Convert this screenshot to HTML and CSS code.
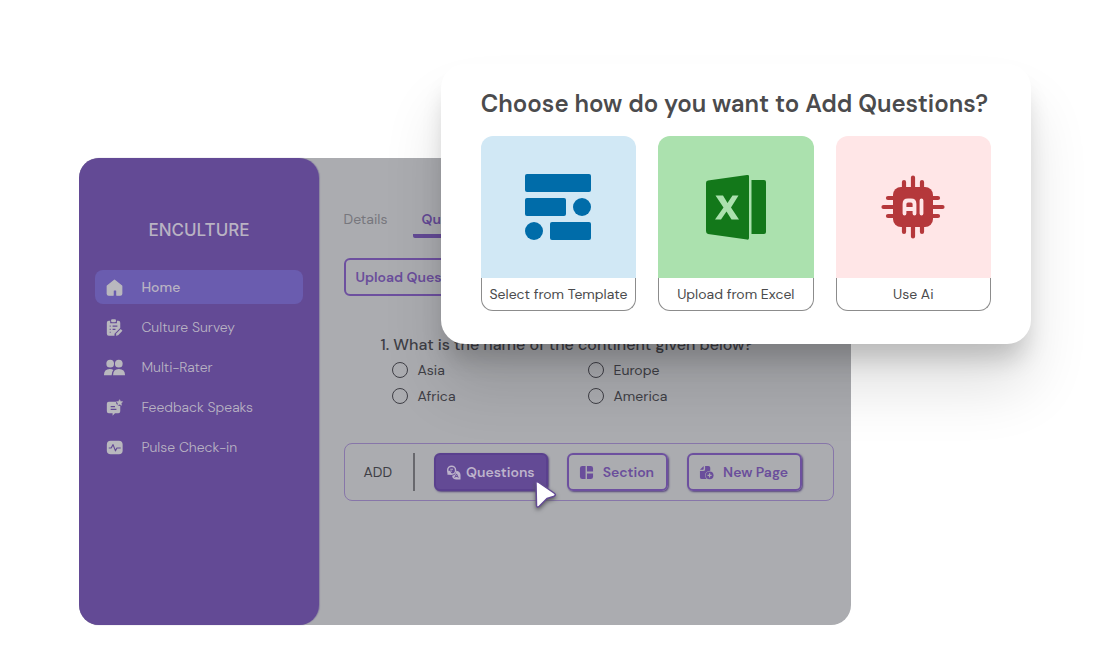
FILE: index.html
```html
<!DOCTYPE html>
<html lang="en">
<head>
<meta charset="utf-8">
<meta name="viewport" content="width=device-width, initial-scale=1">
<title>Enculture</title>
<link rel="stylesheet" href="styles.css">
</head>
<body>
<div class="stage">
  <div class="app">
    <aside class="sidebar">
      <div class="brand">ENCULTURE</div>
      <nav class="nav">
        <a class="nav-item active" href="#">
          <svg class="nav-icon" viewBox="0 0 24 24"><path d="M12 4.500 19.500 10.500V18.500Q19.500 20 18 20H14.500V15.500Q14.500 14.500 13.500 14.500H11.500Q10.500 14.500 10.500 15.500V20H6Q4.500 20 4.500 18.500V10.500Z" stroke="currentColor" stroke-width="1.400" stroke-linejoin="round"/></svg>
          Home</a>
        <a class="nav-item" href="#">
          <svg class="nav-icon" viewBox="0 0 24 24"><path d="M6 5H7.500V7.500H14.500V5H16Q18 5 18 7V12.500L12 18.500V20.500H6Q4 20.500 4 18.500V7Q4 5 6 5Z"/><rect x="8.500" y="3.500" width="5" height="3" rx="1"/><path d="M7 10.500H8M10 10.500H15M7 14H8M10 14H13M7 17H8" stroke="#634a95" stroke-width="1.200"/><path d="M13.500 20.500 14 18 18.500 13.500 20.300 15.300 15.800 20Z"/></svg>
          Culture Survey</a>
        <a class="nav-item" href="#">
          <svg class="nav-icon" viewBox="0 0 24 24"><circle cx="7.500" cy="8" r="4"/><circle cx="16.500" cy="8" r="4"/><path d="M1 20Q1 13.500 7 13.500 9.500 13.500 10.800 14.500 9 16.500 9 20Z"/><path d="M10.500 20Q10.500 13.500 16.500 13.500 23 13.500 23 20Z"/></svg>
          Multi-Rater</a>
        <a class="nav-item" href="#">
          <svg class="nav-icon" viewBox="0 0 24 24"><path d="M6 6H13.500Q14 10.500 18 10.500V16Q18 18 16 18H12.500L10 20.500V18H6Q4 18 4 16V8Q4 6 6 6Z"/><path d="M8 11H12.500M8 14H14" stroke="#634a95" stroke-width="1.300"/><path d="m17.300 3.800 1 1.900 2.200.3-1.600 1.500.4 2.200-2-1-2 1 .4-2.200L14.100 6l2.200-.3Z" stroke="currentColor" stroke-width=".6"/></svg>
          Feedback Speaks</a>
        <a class="nav-item" href="#">
          <svg class="nav-icon" viewBox="0 0 24 24"><rect x="4" y="5" width="16.500" height="14" rx="4"/><path d="M6 12.500H8.500L10.500 9 13 15.500 14.500 12.500H18.500" fill="none" stroke="#634a95" stroke-width="1.200" stroke-linejoin="round"/></svg>
          Pulse Check-in</a>
      </nav>
    </aside>
    <main class="main">
      <nav class="tabs">
        <a class="tab" href="#">Details</a>
        <a class="tab current" href="#">Questions</a>
      </nav>
      <button class="outline upload" type="button">Upload Questions</button>
      <fieldset class="question">
        <legend>1. What is the name of the continent given below?</legend>
        <div class="options">
          <label><input type="radio" name="continent">Asia</label>
          <label><input type="radio" name="continent">Europe</label>
          <label><input type="radio" name="continent">Africa</label>
          <label><input type="radio" name="continent">America</label>
        </div>
      </fieldset>
      <div class="add-bar">
        <span class="add-label">ADD</span>
        <button class="outline filled" type="button">
          <svg class="btn-icon" viewBox="0 0 16 16"><circle cx="6" cy="5.500" r="4.200" fill="none" stroke="currentColor" stroke-width="1.500"/><path d="M1.500 10.500V6H4L7 10.500Z" fill="currentColor"/><path d="M4.500 4.500H7.500M4.500 6.500H6.500" fill="none" stroke="currentColor"/><path d="M11 6Q15.500 6.500 15.500 11V15.500H11Q7 15.500 6.500 11.500 10.500 10.500 11 6Z" fill="currentColor"/><path d="m9.300 13.500 1.900-4 1.900 4M10 12.300H12.500" fill="none" stroke="#634a95"/></svg>
          Questions
          <svg class="cursor" viewBox="0 0 28 34"><path d="M4 4Q3 1.500 6 3L22 14Q25 16 21.500 17.500L15 19.500 7.500 27Q4.500 29.500 4.500 26Z" fill="#fff" stroke="#634a95" stroke-width="1.500" stroke-linejoin="round"/></svg>
        </button>
        <button class="outline" type="button">
          <svg class="btn-icon" viewBox="0 0 16 16" fill="currentColor"><path d="M3.500 1H7V15H3.500Q1 15 1 12.500V3.500Q1 1 3.500 1ZM8.500 1H12.500Q15 1 15 3.500V7H8.500ZM8.500 9H15V12.500Q15 15 12.500 15H8.500Z"/></svg>
          Section</button>
        <button class="outline" type="button">
          <svg class="btn-icon" viewBox="0 0 16 16"><path d="M6.500 1H10Q12 1 12 3V6Q6.500 6.500 6.500 11 6.500 13.500 8 15H3Q1 15 1 13V6.500H4.500Q6.500 6.500 6.500 4.500ZM1 5 5 1V4Q5 5 4 5Z" fill="currentColor"/><circle cx="11.300" cy="11" r="4.200" fill="currentColor"/><path d="M11.300 8.800V13.200M9.100 11H13.500" stroke="#abacb0" stroke-width="1.300"/></svg>
          New Page</button>
      </div>
    </main>
  </div>

  <section class="dialog" role="dialog" aria-labelledby="dialog-title">
    <h1 id="dialog-title">Choose how do you want to Add Questions?</h1>
    <div class="cards">
      <button class="card" type="button">
        <span class="art blue"><svg viewBox="0 0 72 72" fill="#006ca9"><rect x="3" y="3" width="66" height="18" rx="2"/><rect x="3" y="27" width="41" height="18" rx="2"/><circle cx="60" cy="36" r="9"/><circle cx="12" cy="60" r="9"/><rect x="28" y="51" width="41" height="18" rx="2"/></svg></span>
        <span class="caption">Select from Template</span>
      </button>
      <button class="card" type="button">
        <span class="art green"><svg viewBox="0 0 72 72" fill="#13781a"><path d="M8 9.500 47 4Q49 3.700 49 5V67Q49 69 47 68.600L8 63Q6 62.500 6 60V12Q6 9.800 8 9.500Z"/><path d="M51.500 9H64Q66 9 66 11V61Q66 63 64 63H51.500Z"/><path d="M15.500 24.500H23L27.500 32 32.500 24.500H38.500L31 36.500 39 48.500H31.500L26.500 40.500 21 48.500H15L23.500 36.500Z" fill="#abe1ae"/></svg></span>
        <span class="caption">Upload from Excel</span>
      </button>
      <button class="card" type="button">
        <span class="art pink"><svg viewBox="0 0 72 72"><rect x="16" y="16" width="40" height="40" rx="8" fill="#b5383b"/><path d="M36 6.500V16M27 11V18M45 11V18M36 56V65.500M27 54V61M45 54V61M6.500 36H16M11 27H18M11 45H18M56 36H65.500M54 27H61M54 45H61" stroke="#b5383b" stroke-width="4.200" stroke-linecap="round"/><path d="M27.500 42.500V33Q27.500 29.500 31 29.500H34Q37.500 29.500 37.500 33V42.500M27.500 38H37.500M44.500 29.500V42.500" fill="none" stroke="#ffe6e7" stroke-width="3.800" stroke-linecap="round"/></svg></span>
        <span class="caption">Use Ai</span>
      </button>
    </div>
  </section>
</div>
</body>
</html>
```
FILE: styles.css
```css
* { box-sizing: border-box; }

body {
  margin: 0;
  background: #fff;
  font-family: "DM Sans", Inter, "Liberation Sans", sans-serif;
  font-size: 14px;
  color: #3f3f46;
}

button { font: inherit; color: inherit; cursor: pointer; }
a { color: inherit; text-decoration: none; }

.stage {
  position: relative;
  padding: 158px 22.3% 27px 7.25%;
}

.app {
  display: flex;
  min-height: 467px;
  border-radius: 20px;
  background: #abacb0;
}

.sidebar {
  flex: 0 0 31%;
  padding: 60px 16px 0;
  border-radius: 20px;
  background: #634a95;
  color: #b9b3c3;
  box-shadow: 1px 0 1px #8b85a0;
}

.brand {
  font-family: Inter, sans-serif;
  font-size: 17px;
  font-weight: 500;
  line-height: 25px;
  text-align: center;
}

.nav {
  display: flex;
  flex-direction: column;
  gap: 6px;
  margin-top: 27px;
}

.nav-item {
  display: flex;
  align-items: center;
  gap: 15px;
  height: 34px;
  padding-left: 8px;
  border-radius: 8px;
  font-weight: 300;
}

.nav-item.active { background: #6a5caf; font-weight: 500; }

.nav-icon { width: 23px; height: 23px; fill: #b9b8be; color: #b9b8be; }

.main {
  flex: 1;
  min-width: 0;
  padding: 44px 17px 0 25px;
}

.tabs { display: flex; gap: 26px; }

.tab {
  height: 36px;
  line-height: 34px;
  color: #77777d;
}

.tab.current {
  padding: 0 8px;
  border-bottom: 4px solid #634a95;
  border-radius: 2px;
  color: #634a95;
  font-weight: 600;
}

.outline {
  display: flex;
  align-items: center;
  gap: 9px;
  height: 38px;
  padding: 0 12px 0 10px;
  border: 2px solid #6d509f;
  border-radius: 6px;
  background: transparent;
  color: #6a4e9b;
  font-weight: 600;
  white-space: nowrap;
  box-shadow: 1px 1px 2px #55457c;
}

.outline.upload { margin-top: 20px; box-shadow: none; }

.question {
  margin: 39px 0 0;
  padding: 0 0 0 37px;
  border: 0;
}

.question legend {
  padding: 0;
  font-size: 16px;
  font-weight: 500;
  line-height: 20px;
  white-space: nowrap;
}

.options {
  display: grid;
  grid-template-columns: 196px 1fr;
  padding: 2px 0 0 11px;
}

.options label {
  display: flex;
  align-items: center;
  gap: 10px;
  height: 26px;
}

.options input {
  appearance: none;
  width: 16px;
  height: 16px;
  margin: 0;
  border: 1px solid #3f3f46;
  border-radius: 50%;
}

.add-bar {
  display: flex;
  align-items: center;
  gap: 19px;
  height: 58px;
  margin-top: 34px;
  padding-left: 19px;
  border: 1px solid #8776a9;
  border-radius: 8px;
}

.add-label {
  padding-right: 21px;
  border-right: 2px solid #68686d;
  line-height: 38px;
}

.outline.filled {
  position: relative;
  gap: 5px;
  padding-right: 11px;
  background: #634a95;
  border-color: #5a408e;
  color: #bdb3cb;
}

.btn-icon { width: 15px; height: 15px; }

.cursor {
  position: absolute;
  right: -14px;
  bottom: -24px;
  width: 28px;
  height: 34px;
  filter: drop-shadow(0 2px 2px #55555a);
}

.dialog {
  position: absolute;
  top: 64px;
  left: 40.25%;
  right: 5.85%;
  padding: 26px 40px 33px;
  border-radius: 24px;
  background: #fff;
  box-shadow: 0 20px 24px -6px rgba(0, 0, 0, .18), 0 44px 60px 0 rgba(0, 0, 0, .12);
}

.dialog h1 {
  margin: 0;
  color: #4b4b4d;
  font-size: 24px;
  font-weight: 600;
  line-height: 28px;
  white-space: nowrap;
}

.cards {
  display: grid;
  grid-template-columns: repeat(3, 1fr);
  gap: 22px;
  margin-top: 18px;
}

.card {
  display: flex;
  flex-direction: column;
  padding: 0;
  border: 0;
  background: none;
}

.art {
  display: flex;
  align-items: center;
  justify-content: center;
  width: 100%;
  height: 142px;
  border-radius: 12px 12px 0 0;
}

.art svg { width: 72px; height: 72px; }
.blue { background: #d1e8f5; }
.green { background: #abe1ae; }
.pink { background: #ffe6e7; }

.caption {
  width: 100%;
  border: 1px solid #8c8c8c;
  border-top: 0;
  border-radius: 0 0 12px 12px;
  line-height: 32px;
  color: #4b4b4d;
  white-space: nowrap;
}
```
